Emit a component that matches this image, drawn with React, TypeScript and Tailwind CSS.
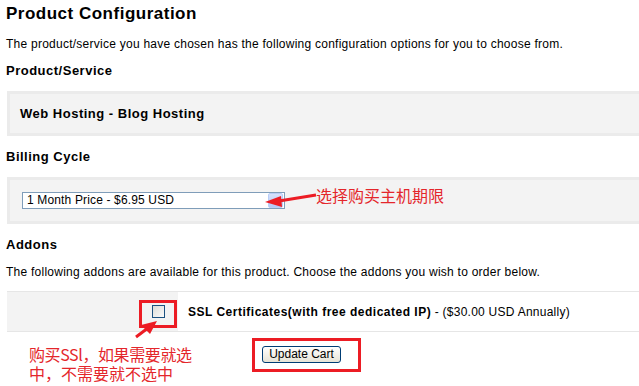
import React from "react";

export default function App() {
  return (
    <div className="relative w-[639px] h-[386px] bg-white overflow-hidden text-black font-['Liberation_Sans',Arial,sans-serif]">
      <div className="pl-[6px] flex flex-col items-start">
        <h1 className="text-[17px] font-bold leading-[20px] mt-[4px] tracking-[0.5px]">Product Configuration</h1>
        <p className="text-[12px] leading-[16px] mt-[12px] tracking-[0.25px]">
          The product/service you have chosen has the following configuration options for you to choose from.
        </p>
        <h2 className="text-[13px] font-bold leading-[16px] mt-[11px] tracking-[0.5px]">Product/Service</h2>
        <div className="ml-[1px] mt-[12px] w-[650px] h-[45px] border-[3px] border-[#ebebeb] bg-[#f3f3f3] pt-[12px] pl-[10px]">
          <div className="text-[13px] font-bold leading-[16px] tracking-[0.5px]">Web Hosting - Blog Hosting</div>
        </div>
        <h2 className="text-[13px] font-bold leading-[16px] mt-[13px] tracking-[0.5px]">Billing Cycle</h2>
        <div className="ml-[1px] mt-[12px] w-[650px] h-[47px] border-[3px] border-[#ebebeb] bg-[#f3f3f3] pt-[12px] pl-[12px]">
          <div className="w-[263px] h-[17px] border border-[#7f9db9] bg-white flex items-center justify-between">
            <span className="text-[12px] leading-[15px] pl-[4px] tracking-[0.15px]">1 Month Price - $6.95 USD</span>
            <span className="w-[15px] h-[15px] mr-[1px] rounded-[2px] bg-gradient-to-b from-[#d6e2fc] to-[#b4c8f6] border border-[#b9cdf7]" />
          </div>
        </div>
        <h2 className="text-[13px] font-bold leading-[16px] mt-[13px] tracking-[0.5px]">Addons</h2>
        <p className="text-[12px] leading-[16px] mt-[11px] tracking-[0.25px]">
          The following addons are available for this product. Choose the addons you wish to order below.
        </p>
        <div className="ml-[1px] mt-[11px] w-[650px] h-[41px] border-y border-[#e6e6e6] flex">
          <div className="w-[171px] h-full bg-[#f3f3f3] flex items-center justify-end pr-[13px]">
            <span className="w-[13px] h-[13px] border border-[#1c5180] bg-gradient-to-br from-[#dcdcd7] to-[#fbfbfb]" />
          </div>
          <div className="flex-1 flex items-center pl-[10px] text-[12px] leading-[16px]">
            <span className="font-bold tracking-[0.5px]">SSL Certificates(with free dedicated IP)</span>
            <span className="tracking-[0.25px]">&nbsp;- ($30.00 USD Annually)</span>
          </div>
        </div>
        <button className="ml-[256px] mt-[14px] w-[79px] h-[17px] rounded-[3px] border border-[#003c74] bg-gradient-to-b from-white to-[#e6e3d6] text-[12px] leading-[15px] flex items-center justify-center">
          Update Cart
        </button>
      </div>

      {/* annotations */}
      <div className="absolute left-[316px] top-[185px] text-[16px] leading-[20px] text-[#e4262b] font-['Noto_Sans_CJK_SC',sans-serif] whitespace-nowrap">
        选择购买主机期限
      </div>
      <div className="absolute left-[139px] top-[300px] w-[38px] h-[28px] border-[3px] border-[#ec1c24]" />
      <div className="absolute left-[252px] top-[338px] w-[109px] h-[34px] border-[3px] border-[#ec1c24]" />
      <div className="absolute left-[29px] top-[345px] text-[16px] leading-[19px] text-[#e4262b] font-['Noto_Sans_CJK_SC',sans-serif] whitespace-nowrap">
        <div className="tracking-[-0.4px]">购买SSl，如果需要就选</div>
        <div>中，不需要就不选中</div>
      </div>
      <svg className="absolute left-0 top-0" width="639" height="386" viewBox="0 0 639 386">
        <line x1="316" y1="195" x2="279" y2="201" stroke="#ec1c24" strokeWidth="3" />
        <polygon points="265,202 281,196 282,207" fill="#ec1c24" />
        <line x1="136" y1="337" x2="148" y2="328" stroke="#ec1c24" strokeWidth="3" />
        <polygon points="157,321 141,325 150,334" fill="#ec1c24" />
      </svg>
    </div>
  );
}
